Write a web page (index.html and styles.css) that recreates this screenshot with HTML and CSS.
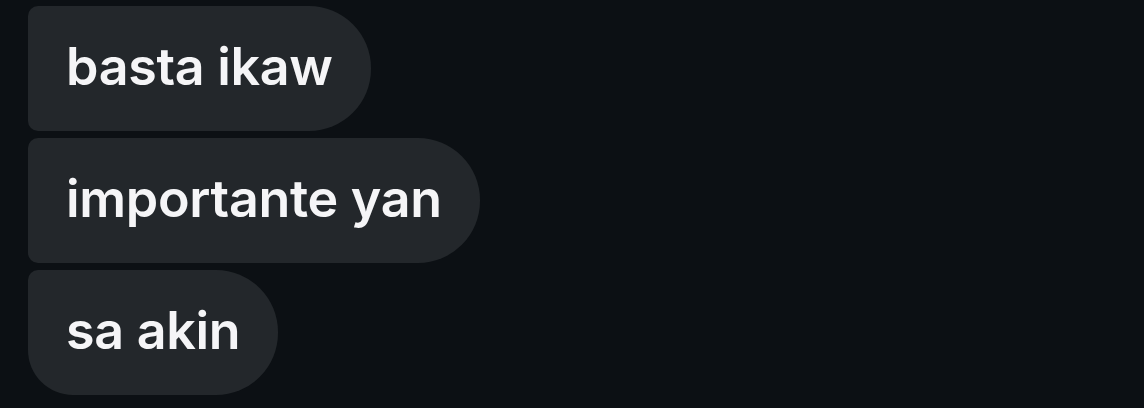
FILE: index.html
```html
<!doctype html>
<html>
  <head>
    <title>Messages</title>
    <meta charset='utf-8'>
    <link rel="stylesheet" href="styles.css">
  </head>
  <body>
    <div class='ch-thread'>
      <div class='ch-bubble ch-first'>basta ikaw</div>
      <div class='ch-bubble'>importante yan</div>
      <div class='ch-bubble ch-last'>sa akin</div>
    </div>
  </body>
</html>
```
FILE: styles.css
```css
html,
body {
  background-color: #0c1014;
  margin: 0;
  padding: 0;
}
body {
  font-family: Inter, 'Noto Sans', sans-serif;
  color: #f5f5f7;
}
.ch-thread {
  display: flex;
  flex-direction: column;
  align-items: flex-start;
  gap: 7px;
  padding: 6px 0 0 28px;
}
.ch-bubble {
  box-sizing: border-box;
  height: 125px;
  display: flex;
  align-items: center;
  padding: 0 38px 4px 38px;
  background-color: #23272b;
  font-size: 52px;
  font-weight: 600;
  letter-spacing: -0.3px;
  border-radius: 10px 62px 62px 10px;
}
.ch-last {
  border-radius: 10px 62px 62px 45px;
}
```
